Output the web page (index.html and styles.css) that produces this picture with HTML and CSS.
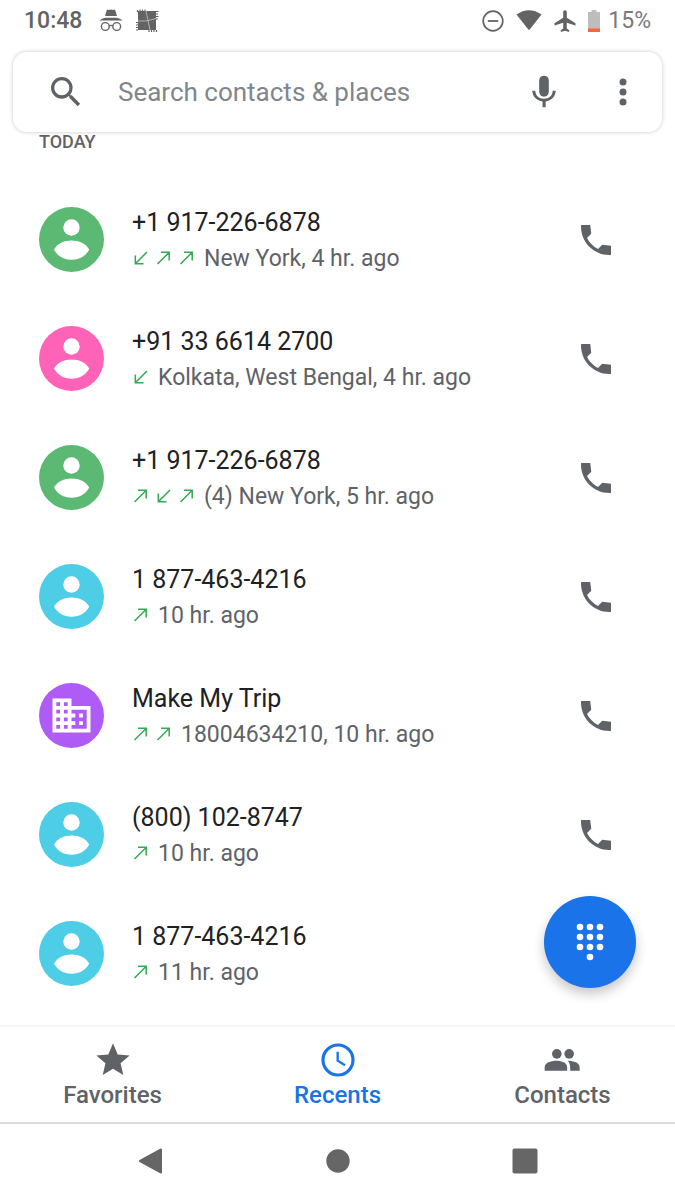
FILE: index.html
```html
<!DOCTYPE html>
<html lang="en">
<head>
  <meta charset="UTF-8">
  <meta name="viewport" content="width=device-width, initial-scale=1">
  <title>Phone</title>
  <link rel="stylesheet" href="styles.css">
</head>
<body>

<!-- Shared icons -->
<svg class="sprite" aria-hidden="true">
  <symbol id="person" viewBox="0 0 65 65">
    <circle cx="32.5" cy="20.5" r="8.2"/>
    <path d="M15 42.500C18.500 36.500 25 33.500 32.600 33.500S46.700 36.500 50.200 42.500C47 49 40.500 52.800 32.600 52.800S18.200 49 15 42.500z"/>
  </symbol>
  <symbol id="business" viewBox="-5.100 -5.100 34.200 34.200">
    <path d="M12 7V3H2v18h20V7H12zM6 19H4v-2h2v2zm0-4H4v-2h2v2zm0-4H4V9h2v2zm0-4H4V5h2v2zm4 12H8v-2h2v2zm0-4H8v-2h2v2zm0-4H8V9h2v2zm0-4H8V5h2v2zm10 12h-8v-2h2v-2h-2v-2h2v-2h-2V9h8v10zm-2-8h-2v2h2v-2zm0 4h-2v2h2v-2z"/>
  </symbol>
  <symbol id="phone" viewBox="0 0 24 24">
    <path d="M21 15.460l-5.270-.610-2.520 2.520c-2.830-1.440-5.150-3.750-6.590-6.590l2.530-2.530L8.540 3H3.030C2.450 13.180 10.820 21.550 21 20.970v-5.510z"/>
  </symbol>
  <symbol id="out" viewBox="0 0 18 18">
    <path d="M2.500 15L14 3.500M6 3.300h8.200V11.500" fill="none" stroke="currentColor" stroke-width="1.500"/>
  </symbol>
  <symbol id="in" viewBox="0 0 18 18">
    <path d="M15 3L3.500 14.500M3.300 6.500v8.200H11.500" fill="none" stroke="currentColor" stroke-width="1.500"/>
  </symbol>
</svg>

<header class="status">
  <span class="clock">10:48</span>
  <svg class="incognito" viewBox="0 0 24 24" aria-hidden="true">
    <path d="M8 .500l2 .600 2-.600 2 .600 2-.600 2 6.500H6zM.5 11.500c2-1.800 5-2.800 6-2.800h11c1 0 4 1 6 2.800z"/>
    <g fill="none" stroke="currentColor" stroke-width="1.400"><circle cx="6.300" cy="17.500" r="3.900"/><circle cx="17.700" cy="17.500" r="3.900"/><path d="M10.200 17q1.800-1.200 3.600 0"/></g>
  </svg>
  <svg class="patch" viewBox="0 0 24 24" aria-hidden="true">
    <path d="M3 2h18v19H3z"/>
    <path d="M2.500 1v2M5 .5v2M7.500 .5v2M10 .5v2M1 13.500h2M1 16h2M1 18.500h2M1 21h2M14 21v2M16.500 21v2M19 21v2M21.500 21v2M21 2.500h2.500M21 5h2M21 7.500h2.500M21 10h2" stroke="currentColor" stroke-width="1.200"/>
    <path d="M11 2L15 21M3 12Q12 13 21 9.500" fill="none" stroke="#c4c4c4" stroke-width=".8"/>
  </svg>
  <span class="status-right">
    <svg viewBox="0 0 24 24" aria-hidden="true"><circle cx="12" cy="12" r="9.800" fill="none" stroke="currentColor" stroke-width="1.700"/><path d="M6.800 11.100h10.400v1.800H6.800z"/></svg>
    <svg class="wifi" viewBox="0 0 26 24" aria-hidden="true"><path d="M.5 5.500Q13-3 25.500 5.500L13.700 20.600q-.7.700-1.400 0z"/></svg>
    <svg viewBox="0 0 24 24" aria-hidden="true"><path d="M22.500 16.500v-2.200l-8.700-5.500V3c0-1-.8-1.800-1.800-1.800s-1.800.800-1.800 1.800v5.800l-8.700 5.500v2.200l8.700-2.700v5.800L7.800 21.300V23l4.200-1.200 4.200 1.200v-1.700l-2.400-1.700v-5.800z"/></svg>
    <svg class="battery" viewBox="0 0 12 22" aria-hidden="true"><path d="M3.500 0h5v2H12v17H0V2h3.500z" fill="#bdbdbd"/><path d="M0 18.500h12V22H0z" fill="#f4653a"/></svg>
    <span class="percent">15%</span>
  </span>
</header>

<form class="search" role="search">
  <button class="icon-btn" type="submit" aria-label="Search">
    <svg viewBox="0 0 24 24"><path d="M15.500 14h-.790l-.280-.270A6.471 6.471 0 0 0 16 9.500 6.500 6.500 0 1 0 9.500 16c1.610 0 3.090-.590 4.230-1.570l.270.280v.790l5 4.990L20.490 19l-4.990-5zm-6 0C7.010 14 5 11.990 5 9.500S7.010 5 9.500 5 14 7.010 14 9.500 11.990 14 9.500 14z"/></svg>
  </button>
  <input type="text" placeholder="Search contacts &amp; places" aria-label="Search contacts &amp; places">
  <button class="icon-btn" type="button" aria-label="Voice search">
    <svg viewBox="0 0 24 24"><rect x="9.100" y="2.200" width="5.800" height="12.600" rx="2.900"/><path d="M19 11.200h-1.800c0 2.900-2.200 4.800-5.200 4.800s-5.200-1.900-5.200-4.800H5c0 3.400 2.700 6 6.100 6.500v3.500H13v-3.500c3.300-.500 6-3.100 6-6.500z"/></svg>
  </button>
  <button class="icon-btn" type="button" aria-label="More options">
    <svg viewBox="0 0 24 24"><circle cx="12" cy="6" r="2.100"/><circle cx="12" cy="12" r="2.100"/><circle cx="12" cy="18" r="2.100"/></svg>
  </button>
</form>

<main class="recents">
  <h2 class="day">TODAY</h2>
  <ul class="calls" id="calls"></ul>
  <button class="fab" type="button" aria-label="Dial pad">
    <svg viewBox="0 0 28 38" aria-hidden="true">
      <circle cx="4" cy="4" r="3.300"/><circle cx="14" cy="4" r="3.300"/><circle cx="24" cy="4" r="3.300"/>
      <circle cx="4" cy="14" r="3.300"/><circle cx="14" cy="14" r="3.300"/><circle cx="24" cy="14" r="3.300"/>
      <circle cx="4" cy="24" r="3.300"/><circle cx="14" cy="24" r="3.300"/><circle cx="24" cy="24" r="3.300"/>
      <circle cx="14" cy="34" r="3.300"/>
    </svg>
  </button>
</main>

<nav class="tabs">
  <a href="#favorites">
    <svg viewBox="0 0 24 24"><path d="M12 17.270L18.180 21l-1.640-7.030L22 9.240l-7.190-.610L12 2 9.190 8.630 2 9.240l5.460 4.730L5.820 21z"/></svg>
    Favorites
  </a>
  <a class="active" href="#recents" aria-current="page">
    <svg viewBox="0 0 24 24"><g fill="none" stroke="currentColor"><circle cx="12" cy="12" r="9" stroke-width="1.900"/><path d="M11.800 7v5.400l4.400 2.700" stroke-width="1.400"/></g></svg>
    Recents
  </a>
  <a href="#contacts">
    <svg viewBox="0 0 24 24"><circle cx="8.300" cy="8.300" r="2.900"/><circle cx="15.700" cy="8.300" r="2.900"/><path d="M1 18.500v-2c0-2.800 3.500-4 7-4s6.500 1.200 6.500 4v2zM14.800 12.500c3.700 0 7.200 1.200 7.200 4v2h-5.700v-2c0-1.700-.5-3-1.500-4z"/></svg>
    Contacts
  </a>
</nav>

<footer class="system">
  <button type="button" aria-label="Back"><svg viewBox="0 0 28 28"><path d="M24 2.500v23L3 14z" stroke="currentColor" stroke-width="2" stroke-linejoin="round"/></svg></button>
  <button type="button" aria-label="Home"><svg viewBox="0 0 28 28"><circle cx="14" cy="14" r="11.700"/></svg></button>
  <button type="button" aria-label="Overview"><svg viewBox="0 0 28 28"><rect x="1.500" y="1.500" width="25" height="25" rx="2"/></svg></button>
</footer>

<script>
  var calls = [
    { name: "+1 917-226-6878", color: "green", arrows: ["in", "out", "out"], info: "New York, 4 hr. ago" },
    { name: "+91 33 6614 2700", color: "pink", arrows: ["in"], info: "Kolkata, West Bengal, 4 hr. ago" },
    { name: "+1 917-226-6878", color: "green", arrows: ["out", "in", "out"], info: "(4) New York, 5 hr. ago" },
    { name: "1 877-463-4216", color: "cyan", arrows: ["out"], info: "10 hr. ago" },
    { name: "Make My Trip", color: "purple", icon: "business", arrows: ["out", "out"], info: "18004634210, 10 hr. ago" },
    { name: "(800) 102-8747", color: "cyan", arrows: ["out"], info: "10 hr. ago" },
    { name: "1 877-463-4216", color: "cyan", arrows: ["out"], info: "11 hr. ago", hideCall: true }
  ];

  function icon(id, cls) {
    return '<svg class="' + cls + '" aria-hidden="true"><use href="#' + id + '"/></svg>';
  }

  // Build the call rows
  var list = document.getElementById("calls");
  calls.forEach(function(call) {
    var row = document.createElement("li");
    row.classList.add("call");
    var arrows = call.arrows.map(function(a) { return icon(a, "arrow"); }).join("");
    row.innerHTML =
      icon(call.icon || "person", "avatar " + call.color) +
      '<div class="details">' +
        '<div class="name">' + call.name + '</div>' +
        '<div class="info">' + arrows + '<span>' + call.info + '</span></div>' +
      '</div>' +
      // the dial pad button covers the last row's call button
      (call.hideCall ? "" : '<button class="icon-btn" type="button" aria-label="Call ' + call.name + '">' + icon("phone", "") + '</button>');
    list.appendChild(row);
  });
</script>

</body>
</html>
```
FILE: styles.css
```css
* {
  box-sizing: border-box;
}
body {
  margin: 0;
  min-height: 100vh;
  display: flex;
  flex-direction: column;
  background: #fff;
  color: #5f6368;
  font-family: Roboto, "Liberation Sans", sans-serif;
}
button {
  border: 0;
  padding: 0;
  background: none;
  color: inherit;
  cursor: pointer;
}
svg {
  display: block;
  fill: currentColor;
}
.sprite {
  position: absolute;
  width: 0;
  height: 0;
}

/* Status bar */
.status {
  display: flex;
  align-items: center;
  height: 40px;
  padding: 1px 24px 0;
  color: #636363;
  font-size: 23px;
}
.status svg {
  width: 24px;
  height: 24px;
}
.clock {
  font-weight: 500;
}
.status .incognito {
  margin-left: 17px;
}
.status .patch {
  margin-left: 12px;
}
.status-right {
  display: flex;
  align-items: center;
  gap: 11px;
  margin-left: auto;
}
.status .wifi {
  width: 26px;
}
.status .battery {
  width: 12px;
  height: 22px;
}
.percent {
  margin-left: -3px;
  color: #7a7a7a;
}

/* Search box */
.search {
  display: flex;
  align-items: center;
  height: 80px;
  margin: 12px 13px 0;
  padding: 0 19px 0 33px;
  background: #fff;
  border-radius: 14px;
  box-shadow: 0 0 4px rgba(0, 0, 0, 0.22);
  position: relative;
  z-index: 1;
}
.search input {
  flex: 1;
  min-width: 0;
  margin: 0 18px 0 32px;
  padding: 0;
  border: 0;
  outline: none;
  background: none;
  font: 26px Roboto, sans-serif;
  color: #202124;
}
.search input::placeholder {
  color: #80868b;
  opacity: 1;
}
.search .icon-btn + .icon-btn {
  margin-left: 39px;
}
.icon-btn svg {
  width: 40px;
  height: 40px;
}

/* Recent calls */
.recents {
  flex: 1;
  position: relative;
}
.day {
  margin: 0;
  padding-left: 39px;
  font-size: 18px;
  font-weight: 500;
  line-height: 20px;
}
.calls {
  list-style: none;
  margin: 28px 0 0;
  padding: 0 59px 12px 39px;
}
.call {
  display: flex;
  align-items: center;
  height: 119px;
}
.avatar {
  width: 65px;
  height: 65px;
  border-radius: 50%;
  color: #fff;
}
.green { background: #5bb974; }
.pink { background: #ff63b8; }
.cyan { background: #4ecde6; }
.purple { background: #af5cf7; }
.details {
  flex: 1;
  min-width: 0;
  margin-left: 28px;
  padding-top: 3px;
}
.name {
  font-size: 25px;
  line-height: 36px;
  color: #202124;
}
.info {
  display: flex;
  align-items: center;
  gap: 5px;
  font-size: 23px;
  line-height: 36px;
}
.info span {
  margin-left: 3px;
}
.arrow {
  width: 18px;
  height: 18px;
  margin-bottom: 2px;
  color: #34a853;
}
.fab {
  position: absolute;
  right: 39px;
  bottom: 37px;
  width: 92px;
  height: 92px;
  display: flex;
  align-items: center;
  justify-content: center;
  border-radius: 50%;
  background: #1a73e8;
  color: #fff;
  box-shadow: 0 6px 12px rgba(0, 0, 0, 0.22);
}
.fab svg {
  width: 28px;
  height: 38px;
}

/* Bottom tabs */
.tabs {
  display: flex;
  height: 97px;
  border-top: 2px solid #f5f5f5;
}
.tabs a {
  flex: 1;
  display: flex;
  flex-direction: column;
  align-items: center;
  padding-top: 13px;
  color: inherit;
  text-decoration: none;
  font: 500 24px/30px Roboto, sans-serif;
}
.tabs svg {
  width: 40px;
  height: 40px;
}
.tabs .active {
  color: #1a73e8;
}

/* System navigation */
.system {
  display: flex;
  justify-content: center;
  gap: 159px;
  height: 79px;
  padding-bottom: 4px;
  border-top: 2px solid #dcdcdc;
  color: #666;
}
.system svg {
  width: 28px;
  height: 28px;
}
```
